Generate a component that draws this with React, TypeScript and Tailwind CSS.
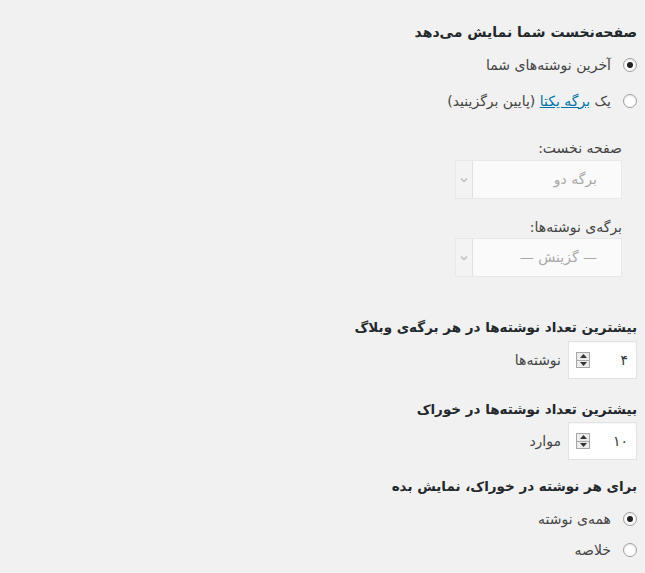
const font = { fontFamily: '"DejaVu Sans", "Noto Sans", sans-serif' };

function Radio({ checked }: { checked?: boolean }) {
  return (
    <span className="flex h-[14px] w-[14px] shrink-0 items-center justify-center rounded-full border border-[#9a9fa4] bg-white shadow-[inset_0_1px_2px_rgba(0,0,0,0.1)]">
      {checked && <span className="h-[6px] w-[6px] rounded-full bg-[#222]" />}
    </span>
  );
}

function Spinner() {
  return (
    <span className="flex h-[16px] w-[14px] flex-col border border-[#a7a7a7] bg-[#ececec]">
      <span className="flex flex-1 items-center justify-center border-b border-[#a7a7a7]">
        <svg width="7" height="4" viewBox="0 0 7 4">
          <path d="M0 4 L3.5 0 L7 4 Z" fill="#333" />
        </svg>
      </span>
      <span className="flex flex-1 items-center justify-center">
        <svg width="7" height="4" viewBox="0 0 7 4">
          <path d="M0 0 L3.5 4 L7 0 Z" fill="#333" />
        </svg>
      </span>
    </span>
  );
}

function NumberField({ value, unit }: { value: string; unit: string }) {
  return (
    <div className="flex items-center gap-[7px]">
      <div className="flex h-[38px] w-[69px] items-center justify-between border border-[#e2e2e2] bg-white pl-[7px] pr-[8px] shadow-[inset_0_1px_2px_rgba(0,0,0,0.04)]">
        <span className="text-[14px] text-[#32373c]">{value}</span>
        <Spinner />
      </div>
      <span className="text-[14px] text-[#444]">{unit}</span>
    </div>
  );
}

function DisabledSelect({ value }: { value: string }) {
  return (
    <div className="flex h-[39px] w-[167px] border border-[#e8e8e8] bg-[#fafafa]">
      <span className="flex flex-1 items-center pr-[24px] text-[14px] text-[#a9a9a9]">{value}</span>
      <span className="flex w-[17px] items-center justify-center border-r border-[#e1e1e1] bg-[#f3f3f3]">
        <svg width="8" height="6" viewBox="0 0 8 6">
          <path d="M1 1.5 L4 4.5 L7 1.5" stroke="#bcbcbc" strokeWidth="1.5" fill="none" />
        </svg>
      </span>
    </div>
  );
}

export default function App() {
  return (
    <div dir="rtl" style={font} className="min-h-screen bg-[#f1f1f1] pr-[8px] pt-[22px] text-[#444]">
      <h2 className="text-[14px] font-bold leading-[20px] text-[#23282d]">صفحه‌نخست شما نمایش می‌دهد</h2>

      <div className="mt-[16px] flex flex-col gap-[22px]">
        <label className="flex items-center gap-[12px] text-[14px] leading-[14px]">
          <Radio checked />
          <span>آخرین نوشته‌های شما</span>
        </label>
        <label className="flex items-center gap-[12px] text-[14px] leading-[14px]">
          <Radio />
          <span>
            یک <a className="text-[#0073aa] underline">برگه یکتا</a> (پایین برگزینید)
          </span>
        </label>
      </div>

      <div className="mr-[15px] mt-[31px] flex flex-col">
        <span className="text-[14px] leading-[18px]">صفحه نخست:</span>
        <div className="mt-[3px]">
          <DisabledSelect value="برگه دو" />
        </div>
        <span className="mt-[19px] text-[14px] leading-[18px]">برگه‌ی نوشته‌ها:</span>
        <div className="mt-[2px]">
          <DisabledSelect value="— گزینش —" />
        </div>
      </div>

      <h2 className="mt-[40px] text-[13.5px] font-bold leading-[20px] text-[#23282d]">بیشترین تعداد نوشته‌ها در هر برگه‌ی وبلاگ</h2>
      <div className="mt-[4px]">
        <NumberField value="۴" unit="نوشته‌ها" />
      </div>

      <h2 className="mt-[20px] text-[13.5px] font-bold leading-[20px] text-[#23282d]">بیشترین تعداد نوشته‌ها در خوراک</h2>
      <div className="mt-[3px]">
        <NumberField value="۱۰" unit="موارد" />
      </div>

      <h2 className="mt-[16px] text-[13.5px] font-bold leading-[20px] text-[#23282d]">برای هر نوشته در خوراک، نمایش بده</h2>
      <div className="mt-[16px] flex flex-col gap-[17px]">
        <label className="flex items-center gap-[12px] text-[14px] leading-[14px]">
          <Radio checked />
          <span>همه‌ی نوشته</span>
        </label>
        <label className="flex items-center gap-[12px] text-[14px] leading-[14px]">
          <Radio />
          <span>خلاصه</span>
        </label>
      </div>
    </div>
  );
}
